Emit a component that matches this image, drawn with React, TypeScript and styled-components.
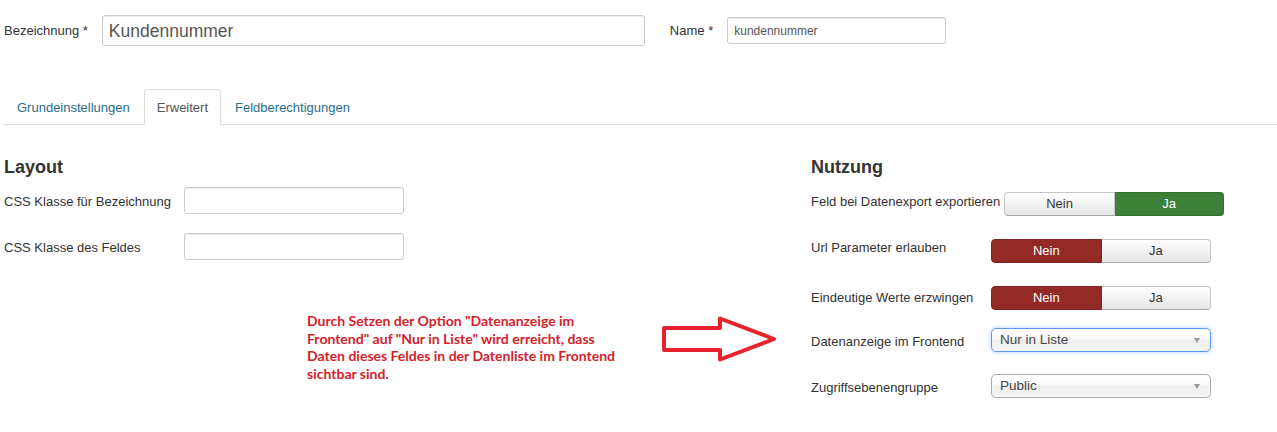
import styled, { createGlobalStyle, css } from "styled-components";

const GlobalStyle = createGlobalStyle`
  html, body {
    margin: 0;
    padding: 0;
    background: #fff;
  }
  body {
    font-family: "Liberation Sans", Arial, sans-serif;
    font-size: 13px;
    line-height: 18px;
    color: #333;
  }
`;

const Page = styled.div`
  width: 1277px;
  padding: 15px 0 0 4px;
  box-sizing: border-box;
`;

const TopRow = styled.div`
  display: flex;
  align-items: center;
  height: 31px;
`;

const TopLabel = styled.label<{ $gap?: number }>`
  margin-left: ${({ $gap }) => $gap ?? 0}px;
  font-size: 13px;
  white-space: nowrap;
`;

const TextInput = styled.div<{ $width: number; $height: number; $gap: number; $size?: number }>`
  box-sizing: border-box;
  width: ${({ $width }) => $width}px;
  height: ${({ $height }) => $height}px;
  margin-left: ${({ $gap }) => $gap}px;
  padding: 0 6px;
  display: flex;
  align-items: center;
  border: 1px solid #ccc;
  border-radius: 3px;
  box-shadow: inset 0 1px 1px rgba(0, 0, 0, 0.075);
  font-size: ${({ $size }) => $size ?? 12}px;
  color: #555;
  background: #fff;
`;

const Tabs = styled.ul`
  display: flex;
  list-style: none;
  margin: 43px 0 0;
  padding: 0;
  border-bottom: 1px solid #ddd;
`;

const Tab = styled.li<{ $active?: boolean }>`
  margin: 0 1px -1px 0;
  padding: 9px 12px 7px;
  line-height: 18px;
  border: 1px solid transparent;
  border-radius: 4px 4px 0 0;
  color: #2a6c8c;
  ${({ $active }) =>
    $active &&
    css`
      color: #555;
      background: #fff;
      border-color: #ddd #ddd transparent;
    `}
`;

const Columns = styled.div`
  display: grid;
  grid-template-columns: 807px 1fr;
  margin-top: 31px;
`;

const Column = styled.section`
  display: flex;
  flex-direction: column;
`;

const Heading = styled.h3`
  margin: 0;
  font-size: 18px;
  line-height: 22px;
  font-weight: bold;
  color: #333;
`;

const FieldRow = styled.div<{ $top: number }>`
  display: flex;
  align-items: flex-start;
  margin-top: ${({ $top }) => $top}px;
`;

const FieldLabel = styled.label<{ $offset: number }>`
  flex: 0 0 auto;
  min-width: 176px;
  margin: ${({ $offset }) => $offset}px 4px 0 0;
  white-space: nowrap;
`;

const FieldInput = styled.div`
  box-sizing: border-box;
  width: 220px;
  height: 27px;
  border: 1px solid #ccc;
  border-radius: 3px;
  box-shadow: inset 0 1px 1px rgba(0, 0, 0, 0.075);
`;

const ToggleGroup = styled.div`
  display: flex;
  width: 220px;
  height: 24px;
`;

const toggleTone = {
  off: css`
    color: #333;
    background: linear-gradient(#ffffff, #e6e6e6);
    border-color: #c5c5c5 #c5c5c5 #a8a8a8;
  `,
  yes: css`
    color: #fff;
    background: #3b8137;
    border-color: #33722f;
  `,
  no: css`
    color: #fff;
    background: #942a25;
    border-color: #842420;
  `,
};

const ToggleButton = styled.div<{ $tone: keyof typeof toggleTone }>`
  flex: 1;
  box-sizing: border-box;
  border: 1px solid;
  text-align: center;
  line-height: 22px;
  font-size: 13px;
  ${({ $tone }) => toggleTone[$tone]}

  &:first-child {
    border-radius: 4px 0 0 4px;
  }
  &:last-child {
    border-radius: 0 4px 4px 0;
    border-left: none;
  }
`;

const Select = styled.div<{ $focused?: boolean }>`
  box-sizing: border-box;
  width: 220px;
  height: 24px;
  padding: 0 10px 0 8px;
  display: flex;
  align-items: center;
  justify-content: space-between;
  border: 1px solid #aaa;
  border-radius: 5px;
  background: linear-gradient(#ffffff 20%, #f6f6f6 50%, #eeeeee 52%, #f4f4f4 100%);
  box-shadow: inset 0 0 3px #fff, 0 1px 1px rgba(0, 0, 0, 0.1);
  font-size: 13.5px;
  color: #444;
  ${({ $focused }) =>
    $focused &&
    css`
      border-color: #5897fb;
      box-shadow: 0 0 4px rgba(88, 151, 251, 0.45);
    `}
`;

const Caret = styled.span`
  width: 0;
  height: 0;
  border-left: 3.5px solid transparent;
  border-right: 3.5px solid transparent;
  border-top: 5px solid #999;
`;

const Annotation = styled.div`
  display: flex;
  align-items: flex-start;
  margin-top: 52px;
  padding-left: 303px;
`;

const Note = styled.p`
  width: 353px;
  margin: 0;
  font-family: Lato, "Open Sans", sans-serif;
  font-weight: bold;
  font-size: 14px;
  line-height: 17.6px;
  color: #d5212b;
  white-space: nowrap;
`;

const Arrow = styled.svg`
  margin-top: 2px;
  flex: 0 0 auto;
`;

type Toggle = { label: string; value: "yes" | "no"; offset: number; top: number };

const toggles: Toggle[] = [
  { label: "Feld bei Datenexport exportieren", value: "yes", offset: 1, top: 14 },
  { label: "Url Parameter erlauben", value: "no", offset: 0, top: 23 },
  { label: "Eindeutige Werte erzwingen", value: "no", offset: 3, top: 23 },
];

const selects = [
  { label: "Datenanzeige im Frontend", value: "Nur in Liste", focused: true, top: 18 },
  { label: "Zugriffsebenengruppe", value: "Public", focused: false, top: 22 },
];

const App = () => {
  return (
    <>
      <GlobalStyle />
      <Page>
        <TopRow>
          <TopLabel>Bezeichnung *</TopLabel>
          <TextInput $width={543} $height={31} $gap={14} $size={17.5}>
            Kundennummer
          </TextInput>
          <TopLabel $gap={25}>Name *</TopLabel>
          <TextInput $width={219} $height={27} $gap={14}>
            kundennummer
          </TextInput>
        </TopRow>

        <Tabs>
          <Tab>Grundeinstellungen</Tab>
          <Tab $active>Erweitert</Tab>
          <Tab>Feldberechtigungen</Tab>
        </Tabs>

        <Columns>
          <Column>
            <Heading>Layout</Heading>
            <FieldRow $top={9}>
              <FieldLabel $offset={6}>CSS Klasse für Bezeichnung</FieldLabel>
              <FieldInput />
            </FieldRow>
            <FieldRow $top={19}>
              <FieldLabel $offset={6}>CSS Klasse des Feldes</FieldLabel>
              <FieldInput />
            </FieldRow>

            <Annotation>
              <Note>
                Durch Setzen der Option "Datenanzeige im
                <br />
                Frontend" auf "Nur in Liste" wird erreicht, dass
                <br />
                Daten dieses Feldes in der Datenliste im Frontend
                <br />
                sichtbar sind.
              </Note>
              <Arrow width="120" height="50" viewBox="0 0 120 50">
                <path
                  d="M4 14 L60 14 L60 4.5 L114 25 L60 45.5 L60 36 L4 36 Z"
                  fill="none"
                  stroke="#e8232b"
                  strokeWidth="4"
                  strokeLinejoin="round"
                />
              </Arrow>
            </Annotation>
          </Column>

          <Column>
            <Heading>Nutzung</Heading>
            {toggles.map((t) => (
              <FieldRow key={t.label} $top={t.top}>
                <FieldLabel $offset={t.offset}>{t.label}</FieldLabel>
                <ToggleGroup>
                  <ToggleButton $tone={t.value === "no" ? "no" : "off"}>Nein</ToggleButton>
                  <ToggleButton $tone={t.value === "yes" ? "yes" : "off"}>Ja</ToggleButton>
                </ToggleGroup>
              </FieldRow>
            ))}
            {selects.map((s) => (
              <FieldRow key={s.label} $top={s.top}>
                <FieldLabel $offset={5}>{s.label}</FieldLabel>
                <Select $focused={s.focused}>
                  <span>{s.value}</span>
                  <Caret />
                </Select>
              </FieldRow>
            ))}
          </Column>
        </Columns>
      </Page>
    </>
  );
};

export default App;
